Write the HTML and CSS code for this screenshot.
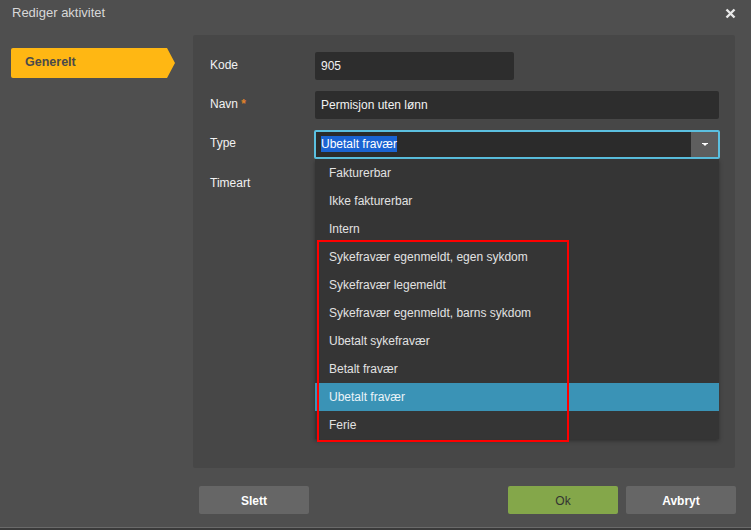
FILE: index.html
```html
<!DOCTYPE html>
<html lang="no">
<head>
<meta charset="utf-8">
<title>Rediger aktivitet</title>
<link rel="stylesheet" href="styles.css">
</head>
<body>
<div class="dialog">
  <div class="header">
    <span class="title">Rediger aktivitet</span>
    <svg class="close" width="11" height="11" viewBox="0 0 11 11"><path d="M1.5 1.5 L9.5 9.5 M9.5 1.5 L1.5 9.5" stroke="#e8e8e8" stroke-width="2.4" fill="none"/></svg>
  </div>
  <div class="main">
    <div class="sidebar">
      <div class="tab">Generelt</div>
    </div>
    <div class="panel">
      <div class="row">
        <label class="label">Kode</label>
        <div class="input short">905</div>
      </div>
      <div class="row">
        <label class="label">Navn <span class="req">*</span></label>
        <div class="input">Permisjon uten lønn</div>
      </div>
      <div class="row">
        <label class="label">Type</label>
        <div class="select-wrap">
          <div class="select">
            <span class="value"><span class="sel">Ubetalt fravær</span></span>
            <span class="btn"><svg width="6" height="4" viewBox="0 0 6 4"><path d="M0 0 H6 V1 H5 L3 3 L1 1 H0 Z" fill="#fff"/></svg></span>
          </div>
          <ul class="list">
            <li>Fakturerbar</li>
            <li>Ikke fakturerbar</li>
            <li>Intern</li>
            <li>Sykefravær egenmeldt, egen sykdom</li>
            <li>Sykefravær legemeldt</li>
            <li>Sykefravær egenmeldt, barns sykdom</li>
            <li>Ubetalt sykefravær</li>
            <li>Betalt fravær</li>
            <li class="active">Ubetalt fravær</li>
            <li>Ferie</li>
          </ul>
          <div class="mark"></div>
        </div>
      </div>
      <div class="row">
        <label class="label">Timeart</label>
      </div>
    </div>
  </div>
  <div class="footer">
    <button class="b grey">Slett</button>
    <span class="spacer"></span>
    <button class="b green">Ok</button>
    <button class="b grey">Avbryt</button>
  </div>
</div>
</body>
</html>
```

FILE: styles.css
```css
html, body {
  margin: 0;
  padding: 0;
  background: #4f4f4f;
}
body {
  font-family: "Liberation Sans", Arial, sans-serif;
  font-size: 12px;
  color: #f0f0f0;
}
.dialog {
  width: 751px;
  height: 530px;
  box-sizing: border-box;
  display: flex;
  flex-direction: column;
  border-bottom: 2px solid #3a3a3a;
  box-shadow: inset 0 -1px 0 #6a6a6a;
}
.header {
  height: 27px;
  padding: 0 15px 0 12px;
  display: flex;
  align-items: center;
  justify-content: space-between;
}
.title {
  font-size: 13px;
  color: #d8d8d8;
  margin-top: -2px;
}
.close {
  margin-top: -1px;
}
.main {
  display: flex;
  margin-top: 8px;
}
.sidebar {
  width: 193px;
  flex: none;
  padding-top: 13px;
}
.tab {
  margin-left: 11px;
  width: 164px;
  height: 30px;
  box-sizing: border-box;
  padding-left: 14px;
  line-height: 29px;
  background: #ffb713;
  color: #4a4a4a;
  font-weight: bold;
  font-size: 12.5px;
  border-radius: 2px 0 0 2px;
  clip-path: polygon(0 0, 156px 0, 164px 15px, 156px 30px, 0 30px);
}
.panel {
  width: 542px;
  height: 433px;
  box-sizing: border-box;
  background: #474747;
  border-radius: 2px;
  padding: 17px 16px 0 17px;
  display: flex;
  flex-direction: column;
  gap: 11px;
}
.row {
  display: flex;
  align-items: flex-start;
  min-height: 28px;
}
.label {
  width: 105px;
  flex: none;
  line-height: 27px;
  color: #f2f2f2;
}
.req {
  color: #e0822a;
  font-weight: bold;
}
.input {
  flex: 1;
  height: 28px;
  line-height: 28px;
  box-sizing: border-box;
  padding-left: 6px;
  background: #2d2d2d;
  border-radius: 2px;
  color: #f2f2f2;
}
.input.short {
  flex: none;
  width: 199px;
}
.select-wrap {
  flex: 1;
  position: relative;
  margin-left: -1px;
  margin-right: -1px;
}
.select {
  display: flex;
  height: 29px;
  box-sizing: border-box;
  border: 2px solid #5bc0e0;
  border-radius: 2px;
  background: #2b2b2b;
}
.value {
  flex: 1;
  padding-left: 5px;
  line-height: 25px;
}
.sel {
  background: #1a63d2;
  color: #fff;
  padding: 1px 0;
}
.btn {
  width: 27px;
  background: #5e5e5e;
  display: flex;
  align-items: center;
  justify-content: center;
}
.list {
  position: absolute;
  left: 1px;
  right: 1px;
  top: 29px;
  margin: 0;
  padding: 0;
  list-style: none;
  background: #353535;
  box-shadow: 0 2px 4px rgba(0, 0, 0, 0.35);
  z-index: 2;
}
.list li {
  height: 28px;
  line-height: 28px;
  padding-left: 14px;
  color: #e2e2e2;
}
.list li.active {
  background: #3a93b6;
  color: #eaf4f8;
}
.mark {
  position: absolute;
  left: 3px;
  top: 110px;
  width: 252px;
  height: 202px;
  box-sizing: border-box;
  border: 2px solid #ff0000;
  z-index: 3;
}
.footer {
  display: flex;
  gap: 8px;
  padding: 18px 15px 0 199px;
}
.spacer {
  flex: 1;
}
.b {
  width: 110px;
  height: 28px;
  border: none;
  border-radius: 2px;
  font-family: "Liberation Sans", Arial, sans-serif;
  font-size: 12px;
  cursor: pointer;
  padding: 2px 0 0;
}
.b.grey {
  background: #666666;
  color: #ffffff;
  font-weight: bold;
}
.b.green {
  background: #84a74a;
  color: #333333;
}
```
